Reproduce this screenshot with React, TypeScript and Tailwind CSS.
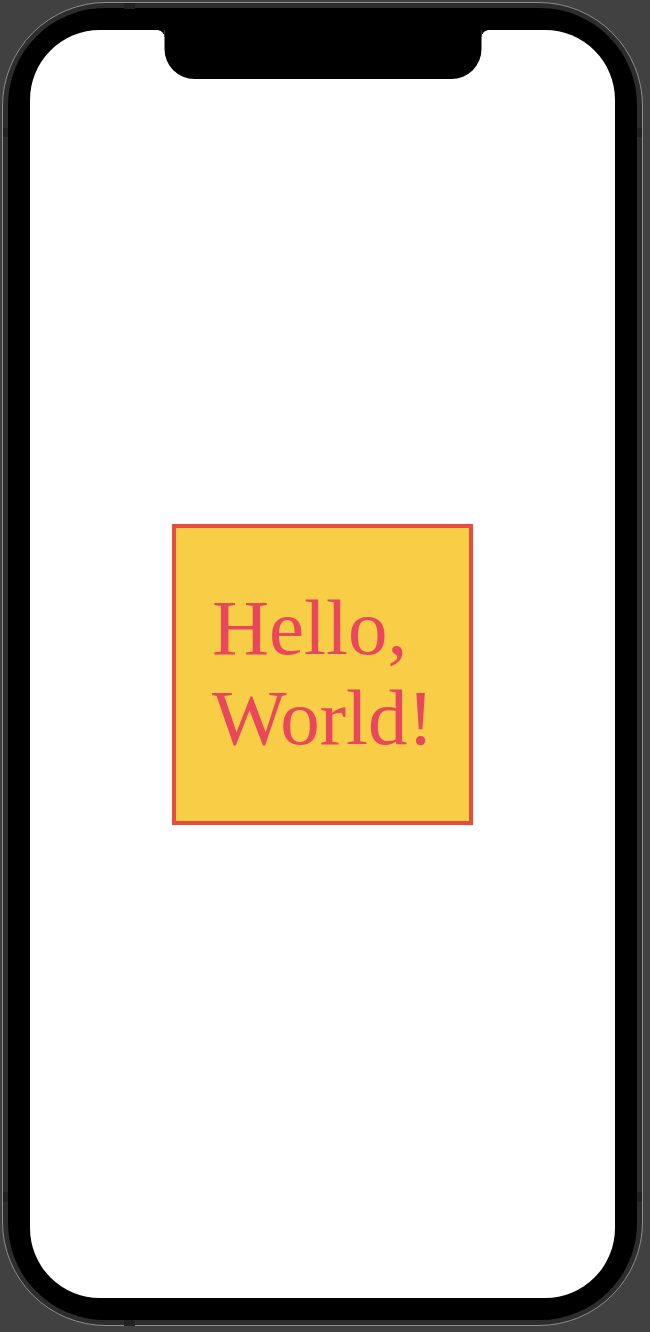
import React from "react";

export default function App() {
  return (
    <div className="w-[650px] h-[1332px] bg-[#414141] relative overflow-hidden pl-[2px] pt-[2px]">
      <div className="w-[641px] h-[1324px] rounded-[104px] border border-[#8d8d8d] bg-[#2d2d2d] p-[5px]">
        <div className="w-full h-full rounded-[97px] bg-black p-[22px]">
          <div className="relative w-full h-full rounded-[70px] bg-white flex flex-col items-center pt-[494px]">
            {/* notch */}
            <div className="absolute top-0 left-1/2 -translate-x-1/2 flex">
              <div className="w-[7px] h-[7px] bg-[radial-gradient(circle_at_0_100%,transparent_6.5px,black_7px)]" />
              <div className="w-[317px] h-[49px] bg-black rounded-b-[30px]" />
              <div className="w-[7px] h-[7px] bg-[radial-gradient(circle_at_100%_100%,transparent_6.5px,black_7px)]" />
            </div>
            <div className="w-[301px] h-[301px] border-4 border-[#e84c3d] bg-[#f7ce46] pl-[36px] pt-[55px]">
              <p
                className="text-[79px] leading-[90px] text-[#ea465c]"
                style={{ fontFamily: '"Liberation Serif", "DejaVu Serif", serif' }}
              >
                Hello,
                <br />
                World!
              </p>
            </div>
          </div>
        </div>
      </div>
      {/* antenna bands */}
      <div className="absolute left-[124px] top-[3px] w-[11px] h-[6px] bg-[#222]" />
      <div className="absolute left-[124px] top-[1320px] w-[11px] h-[6px] bg-[#222]" />
      <div className="absolute left-[3px] top-[128px] w-[5px] h-[9px] bg-[#222]" />
      <div className="absolute left-[637px] top-[128px] w-[5px] h-[9px] bg-[#222]" />
      <div className="absolute left-[3px] top-[1192px] w-[5px] h-[10px] bg-[#222]" />
      <div className="absolute left-[637px] top-[1192px] w-[5px] h-[10px] bg-[#222]" />
    </div>
  );
}
